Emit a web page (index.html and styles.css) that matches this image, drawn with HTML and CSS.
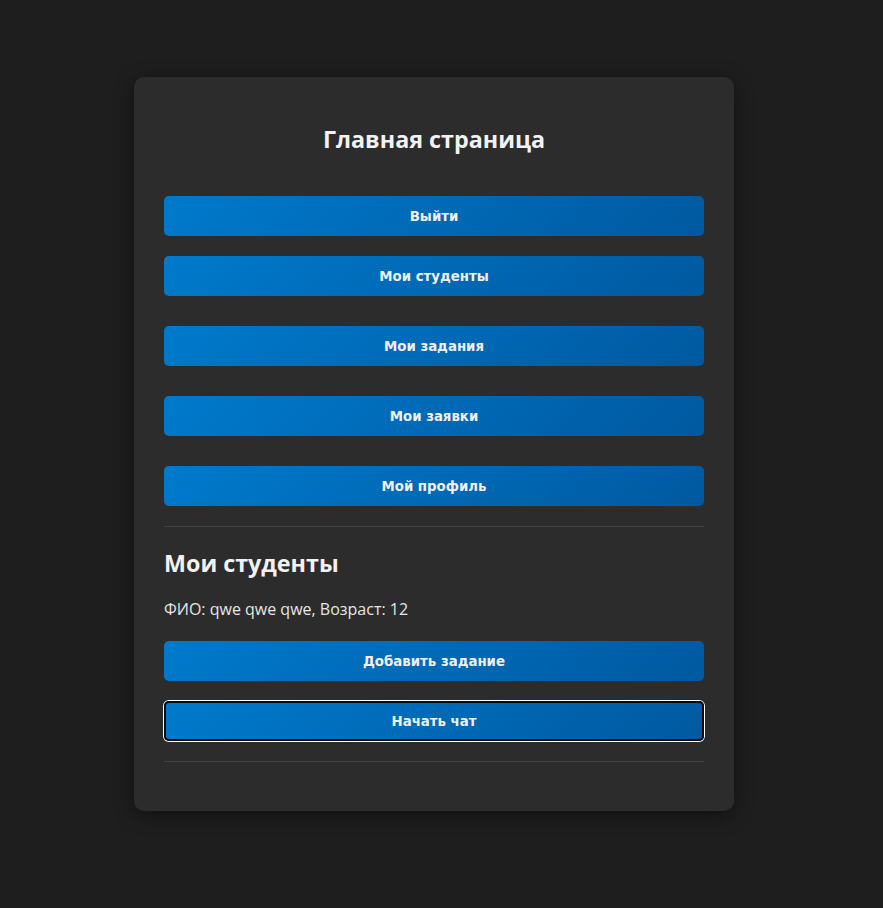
FILE: index.html
```html
<!DOCTYPE html>
<html lang="ru">
<head>
<meta charset="utf-8">
<title>Главная страница</title>
<link rel="stylesheet" href="styles.css">
</head>
<body>
<main class="card">
  <h1 class="title">Главная страница</h1>
  <button class="btn btn-first">Выйти</button>
  <button class="btn">Мои студенты</button>
  <button class="btn">Мои задания</button>
  <button class="btn">Мои заявки</button>
  <button class="btn">Мой профиль</button>
  <hr class="divider">
  <section class="students">
    <h2 class="subtitle">Мои студенты</h2>
    <p class="student">ФИО: qwe qwe qwe, Возраст: 12</p>
    <button class="btn btn-tight">Добавить задание</button>
    <button class="btn btn-tight btn-focus">Начать чат</button>
    <hr class="divider divider-end">
  </section>
</main>
</body>
</html>
```
FILE: styles.css
```css
* { box-sizing: border-box; }
html, body { margin: 0; padding: 0; }
body {
  background: #1e1e1e;
  color: #eaeaea;
  font-family: "Open Sans", "Noto Sans", sans-serif;
  padding: 77px 15px 97px 0;
}
.card {
  width: 600px;
  margin: 0 auto;
  background: #2c2c2c;
  border-radius: 10px;
  box-shadow: 0 4px 20px rgba(0,0,0,0.45);
  padding: 46px 30px 49px;
  display: flex;
  flex-direction: column;
}
.title {
  margin: 0 0 40px;
  font-size: 23.3px;
  font-weight: 700;
  line-height: 33px;
  text-align: center;
  color: #f2f2f2;
}
.btn {
  display: block;
  width: 100%;
  height: 40px;
  border: none;
  border-radius: 5px;
  background: linear-gradient(135deg, #007acc 0%, #0059a0 100%);
  color: #f0f0f0;
  font-family: "DejaVu Sans", sans-serif;
  font-size: 13.333px;
  font-weight: 700;
  margin: 0 0 30px;
  padding: 0;
  cursor: pointer;
}
.btn-first { margin-bottom: 20px; }
.btn:nth-of-type(5) { margin-bottom: 20px; }
.divider {
  border: none;
  border-top: 1px solid #444;
  margin: 0;
  height: 0;
}
.students { display: flex; flex-direction: column; }
.subtitle {
  margin: 20px 0 0;
  font-size: 23.3px;
  font-weight: 700;
  line-height: 33px;
  color: #f2f2f2;
}
.student {
  margin: 18px 0 0;
  font-size: 16px;
  line-height: 22px;
  color: #e6e6e6;
}
.btn-tight { margin: 0; }
.student + .btn-tight { margin-top: 21px; }
.btn-focus {
  margin-top: 20px;
  box-shadow: inset 0 0 0 2px #0a0a0a, 0 0 0 1px #ffffff;
}
.divider-end { margin-top: 20px; }
```
